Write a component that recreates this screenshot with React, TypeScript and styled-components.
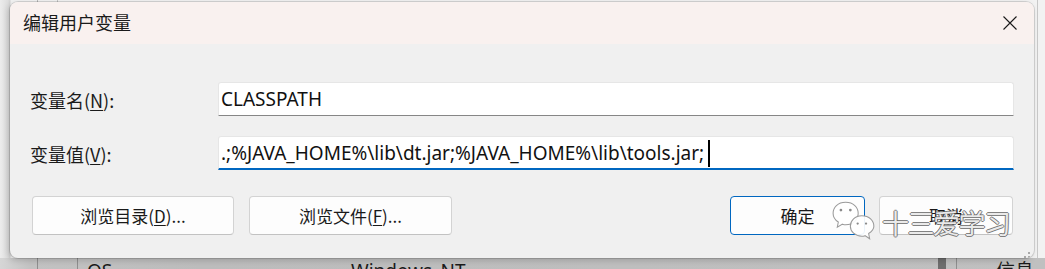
import React from "react";
import styled, { createGlobalStyle } from "styled-components";

const Global = createGlobalStyle`
  html, body { margin: 0; padding: 0; }
  body { width: 1045px; height: 269px; overflow: hidden; background: #e6e6e6; }
  * { box-sizing: border-box; }
`;

const FONT = `"Segoe UI", "Noto Sans", "Noto Sans CJK SC", sans-serif`;
const CJK = `"Noto Sans CJK SC", "Noto Sans", sans-serif`;

const Screen = styled.div`
  position: relative;
  width: 1045px;
  height: 269px;
  overflow: hidden;
  display: flex;
  flex-direction: column;
  background:
    linear-gradient(to right, transparent 37px, #b9b9b9 37px, #b9b9b9 38px, transparent 38px,
      transparent 57px, #c4c4c4 57px, #c4c4c4 58px, transparent 58px),
    linear-gradient(to right, #ececec 0px, #dedede 8px, #d4d4d4 10px, #f2f2f2 11px);
  font-family: ${FONT};
`;

const SideLine = styled.div`
  position: absolute;
  top: 0;
  right: 7px;
  width: 1px;
  height: 258px;
  background: #c8c8c8;
`;

const Dialog = styled.div`
  position: relative;
  z-index: 1;
  margin: 2px 0 0 10px;
  width: 1024px;
  height: 256px;
  border-radius: 8px;
  background: #f0f0f0;
  overflow: hidden;
  box-shadow: 0 0 0 1px rgba(0, 0, 0, 0.12), -2px 2px 6px rgba(0, 0, 0, 0.18);
  display: flex;
  flex-direction: column;
`;

const TitleBar = styled.div`
  height: 42px;
  flex: none;
  background: #f9f1ef;
  display: flex;
  align-items: center;
  justify-content: space-between;
  padding: 0 16px 0 13px;
`;

const Title = styled.div`
  font-family: ${CJK};
  font-size: 18px;
  color: #1a1a1a;
  margin-top: -2px;
`;

const CloseBtn = styled.div`
  width: 16px;
  height: 16px;
  display: flex;
  align-items: center;
  justify-content: center;
  margin-top: -1px;
`;

const Body = styled.div`
  flex: 1;
  display: flex;
  flex-direction: column;
  padding: 38px 20px 0 20px;
`;

const Row = styled.div<{ $gap?: number }>`
  display: flex;
  align-items: center;
  height: 34px;
  margin-bottom: ${(p) => p.$gap ?? 0}px;
`;

const Label = styled.div`
  width: 188px;
  flex: none;
  font-family: ${CJK};
  font-size: 18px;
  color: #1a1a1a;
  padding-top: 1px;
  u { text-underline-offset: 2px; }
`;

const Field = styled.div<{ $focused?: boolean }>`
  flex: 1;
  height: 34px;
  background: #ffffff;
  border: 1px solid #e6e6e6;
  border-bottom: ${(p) => (p.$focused ? "2px solid #0067c0" : "1px solid #868686")};
  border-radius: 3px 3px 0 0;
  display: flex;
  align-items: center;
  padding: 0 0 0 2px;
  font-family: ${FONT};
  font-size: 19px;
  color: #111;
  white-space: nowrap;
`;

const Caret = styled.span`
  display: inline-block;
  width: 2px;
  height: 27px;
  background: #000;
  margin-left: 4px;
  margin-top: 1px;
`;

const ButtonRow = styled.div`
  display: flex;
  align-items: center;
  margin-top: 26px;
  padding-left: 2px;
`;

const Spacer = styled.div`
  flex: 1;
`;

const Button = styled.div<{ $w: number; $primary?: boolean; $gap?: number }>`
  width: ${(p) => p.$w}px;
  height: 39px;
  margin-right: ${(p) => p.$gap ?? 0}px;
  background: #fdfdfd;
  border: 1px solid ${(p) => (p.$primary ? "#0067c0" : "#d3d3d3")};
  border-bottom-color: ${(p) => (p.$primary ? "#0067c0" : "#c2c2c2")};
  border-radius: 4px;
  display: flex;
  align-items: center;
  justify-content: center;
  font-family: ${CJK};
  font-size: 17px;
  color: #1a1a1a;
  u { text-underline-offset: 2px; }
`;

const Grip = styled.div`
  position: absolute;
  right: 4px;
  bottom: 3px;
  width: 10px;
  height: 10px;
`;

const BehindStrip = styled.div`
  position: relative;
  flex: 1;
  background: linear-gradient(to right, #d6d6d6 0px, #c2c2c2 30px, #bcbcbc 200px, #c0c0c0 1045px);
  display: flex;
  align-items: flex-start;
  font-family: ${FONT};
  font-size: 19px;
  color: #1b1b1b;
  overflow: hidden;
`;

const StripCell = styled.div<{ $w: number; $line?: boolean }>`
  width: ${(p) => p.$w}px;
  flex: none;
  height: 100%;
  border-right: ${(p) => (p.$line ? "1px solid #8e8e8e" : "none")};
`;

const StripText = styled.div<{ $w: number }>`
  width: ${(p) => p.$w}px;
  flex: none;
  line-height: 19px;
  padding-top: 4px;
  padding-left: 9px;
`;

const DarkBlock = styled.div`
  width: 8px;
  flex: none;
  height: 100%;
  background: #6e6e6e;
`;

const Watermark = styled.div`
  position: absolute;
  z-index: 2;
  left: 831px;
  top: 198px;
  display: flex;
  align-items: center;
  gap: 5px;
  pointer-events: none;
`;

const WaterText = styled.div`
  font-family: ${CJK};
  font-size: 27px;
  letter-spacing: -1.5px;
  color: rgba(255, 255, 255, 0.88);
  text-shadow:
    -1px 0 0 rgba(90, 90, 90, 0.75), 1px 0 0 rgba(90, 90, 90, 0.75),
    0 -1px 0 rgba(90, 90, 90, 0.75), 0 1px 0 rgba(90, 90, 90, 0.75);
  line-height: 1;
  margin-top: 3px;
`;

function WeChatIcon() {
  return (
    <svg width="46" height="46" viewBox="0 0 44 44">
      <g fill="rgba(255,255,255,0.92)" stroke="#9a9a9a" strokeWidth="1">
        <path d="M14 4 C6.5 4 2 9 2 14.5 C2 18 4 21 7 23 L6 28 L11 25 C12 25.3 13 25.5 14 25.5 C21.5 25.5 26 20.5 26 14.5 C26 9 21.5 4 14 4 Z" />
        <path d="M29.5 17 C23 17 18.5 21.5 18.5 27 C18.5 32 23 36.5 29.5 36.5 C30.5 36.5 31.5 36.3 32.5 36 L37 39 L36 34 C39 32 41 29.5 41 27 C41 21.5 36.5 17 29.5 17 Z" />
      </g>
      <g fill="#8a8a8a">
        <circle cx="9.5" cy="11.5" r="1.3" />
        <circle cx="18.5" cy="11.5" r="1.3" />
        <circle cx="25.5" cy="24.5" r="1.1" />
        <circle cx="33.5" cy="24.5" r="1.1" />
      </g>
    </svg>
  );
}

function CloseIcon() {
  return (
    <svg width="16" height="16" viewBox="0 0 16 16">
      <path d="M1.5 1.5 L14.5 14.5 M14.5 1.5 L1.5 14.5" stroke="#1a1a1a" strokeWidth="1.1" />
    </svg>
  );
}

function GripIcon() {
  return (
    <svg width="10" height="10" viewBox="0 0 10 10">
      <g fill="#a9a9a9">
        <rect x="8" y="0" width="2" height="2" />
        <rect x="4" y="4" width="2" height="2" />
        <rect x="8" y="4" width="2" height="2" />
        <rect x="0" y="8" width="2" height="2" />
        <rect x="4" y="8" width="2" height="2" />
        <rect x="8" y="8" width="2" height="2" />
      </g>
    </svg>
  );
}

export default function App() {
  return (
    <>
      <Global />
      <Screen>
        <SideLine />
        <Dialog>
          <TitleBar>
            <Title>编辑用户变量</Title>
            <CloseBtn>
              <CloseIcon />
            </CloseBtn>
          </TitleBar>
          <Body>
            <Row $gap={20}>
              <Label>
                变量名(<u>N</u>):
              </Label>
              <Field>CLASSPATH</Field>
            </Row>
            <Row>
              <Label>
                变量值(<u>V</u>):
              </Label>
              <Field $focused>
                .;%JAVA_HOME%\lib\dt.jar;%JAVA_HOME%\lib\tools.jar;
                <Caret />
              </Field>
            </Row>
            <ButtonRow>
              <Button $w={202} $gap={15}>
                浏览目录(<u>D</u>)...
              </Button>
              <Button $w={203}>
                浏览文件(<u>F</u>)...
              </Button>
              <Spacer />
              <Button $w={135} $primary $gap={14}>
                确定
              </Button>
              <Button $w={134} $gap={1}>
                取消
              </Button>
            </ButtonRow>
          </Body>
          <Grip>
            <GripIcon />
          </Grip>
        </Dialog>
        <BehindStrip>
          <StripCell $w={38} $line />
          <StripCell $w={40} $line />
          <StripText $w={264}>OS</StripText>
          <StripText $w={596}>Windows_NT</StripText>
          <DarkBlock />
          <StripCell $w={11} $line />
          <StripCell $w={30} />
          <StripText $w={58}>信息</StripText>
        </BehindStrip>
        <Watermark>
          <WeChatIcon />
          <WaterText>十三爱学习</WaterText>
        </Watermark>
      </Screen>
    </>
  );
}
